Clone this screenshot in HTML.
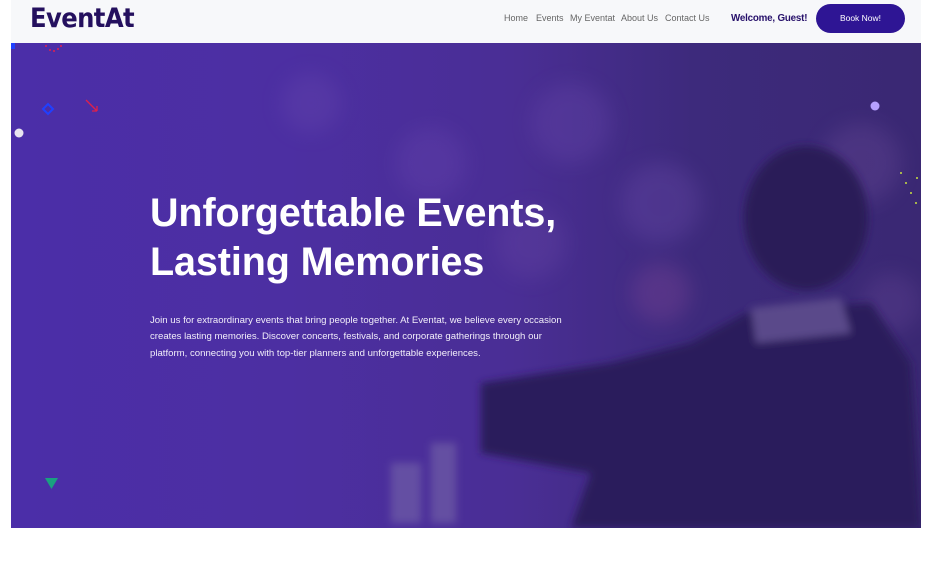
<!DOCTYPE html>
<html><head><meta charset="utf-8"><style>
*{margin:0;padding:0;box-sizing:border-box}
body{width:934px;height:570px;background:#fff;position:relative;overflow:hidden;font-family:"Liberation Sans",sans-serif}
.hdr{position:absolute;left:11px;top:0;width:910px;height:43px;background:#f7f8fa}
.logo{position:absolute;left:19px;top:3px;font-size:27px;font-weight:bold;color:#24105e;font-family:"DejaVu Sans Condensed","DejaVu Sans",sans-serif;letter-spacing:-0.6px}
.nav{position:absolute;top:13px;font-size:9px;color:#666}
.wel{position:absolute;left:720px;top:13px;font-size:9.8px;font-weight:bold;color:#26106a;letter-spacing:-0.2px}
.btn{position:absolute;left:805px;top:4px;width:89px;height:29px;border-radius:15px;background:#2e1594;color:#fff;font-size:8.5px;text-align:center;line-height:29px}
.hero{position:absolute;left:11px;top:43px;width:910px;height:485px;overflow:hidden;background:linear-gradient(90deg,#4b2ea8 0%,#4c2fa2 30%,#4a2e95 55%,#3d2a7c 75%,#3a2873 100%)}
.h1{position:absolute;left:139px;top:146px;font-size:39.5px;font-weight:bold;color:#fff;line-height:49px;letter-spacing:-0.1px}
.p{position:absolute;left:139px;top:270px;width:430px;font-size:9.6px;line-height:16.3px;color:#f2eefa}
</style></head><body>
<div class="hdr">
<div class="logo">EventAt</div>
<span class="nav" style="left:493px">Home</span>
<span class="nav" style="left:525px">Events</span>
<span class="nav" style="left:559px">My Eventat</span>
<span class="nav" style="left:610px">About Us</span>
<span class="nav" style="left:654px">Contact Us</span>
<div class="wel">Welcome, Guest!</div>
<div class="btn">Book Now!</div>
</div>
<div class="hero">
<svg width="910" height="485" style="position:absolute;left:0;top:0">
<defs><filter id="b"><feGaussianBlur stdDeviation="10"/></filter><filter id="s"><feGaussianBlur stdDeviation="4"/></filter></defs>
<g filter="url(#b)" opacity=".3">
<circle cx="300" cy="60" r="30" fill="#6a4bb0"/><circle cx="420" cy="120" r="35" fill="#6a4ab0"/>
<circle cx="560" cy="80" r="40" fill="#6c4cae"/><circle cx="650" cy="160" r="40" fill="#7050ae"/>
<circle cx="520" cy="200" r="35" fill="#6a4aa6"/><circle cx="850" cy="120" r="40" fill="#70509c"/>
<circle cx="650" cy="250" r="30" fill="#8a4c9a"/><circle cx="880" cy="260" r="30" fill="#6a4a9a"/>
</g>
<g filter="url(#s)">
<ellipse cx="795" cy="175" rx="62" ry="72" fill="#2a1a58"/>
<path d="M735 270 L860 260 L900 320 L910 485 L560 485 L580 430 L470 410 L470 340 L600 320 L680 300 Z" fill="#2b1c5c"/>
<path d="M740 265 L830 255 L840 290 L745 300 Z" fill="#5a4a8a"/>
<rect x="380" y="420" width="30" height="60" fill="#8a80b0" opacity=".4"/>
<rect x="420" y="400" width="25" height="80" fill="#8a80b0" opacity=".4"/>
</g>
<rect x="0" y="0" width="4" height="6" fill="#2040ff"/>
<circle cx="8" cy="90" r="4.5" fill="#e8e4f0"/>
<circle cx="864" cy="63" r="4.5" fill="#b6a0ff"/>
<path d="M32 66 L37 61 L42 66 L37 71 Z" fill="none" stroke="#2040ff" stroke-width="2"/>
<path d="M75 57 L86 68 M86 68 L86 63 M86 68 L81 68" stroke="#e0204a" stroke-width="1.3" fill="none"/>
<path d="M34 435 L47 435 L40.5 446 Z" fill="#1aa080"/>
<g fill="#e02050"><circle cx="35" cy="3" r="1"/><circle cx="39" cy="7" r="1"/><circle cx="43" cy="8" r="1"/><circle cx="47" cy="6" r="1"/><circle cx="50" cy="3" r="1"/></g>
<g fill="#c8e040"><circle cx="890" cy="130" r="1"/><circle cx="895" cy="140" r="1"/><circle cx="900" cy="150" r="1"/><circle cx="905" cy="160" r="1"/><circle cx="906" cy="135" r="1"/></g>
</svg>
<div class="h1">Unforgettable Events,<br>Lasting Memories</div>
<div class="p">Join us for extraordinary events that bring people together. At Eventat, we believe every occasion creates lasting memories. Discover concerts, festivals, and corporate gatherings through our platform, connecting you with top-tier planners and unforgettable experiences.</div>
</div>
</body></html>
